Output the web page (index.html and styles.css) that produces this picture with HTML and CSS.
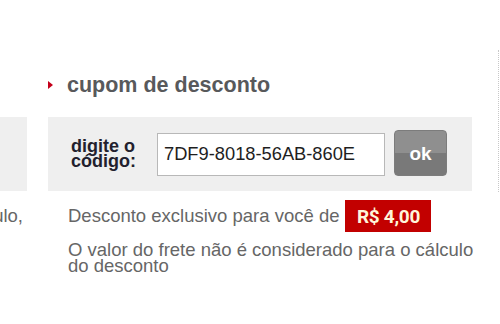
FILE: index.html
```html
<!doctype html>
<html>
<head>
    <title>Cupom de desconto</title>
    <meta charset="utf-8">
    <link rel="stylesheet" href="styles.css">
</head>
<body>
    <div class="pagina">
        <!-- Coluna anterior (cortada) -->
        <div class="anterior">
            <div class="anterior-caixa"></div>
            <p class="anterior-texto"><span>para o cálculo,</span></p>
        </div>

        <!-- Cupom -->
        <div class="cupom">
            <h2 class="titulo">cupom de desconto</h2>
            <div class="caixa">
                <label for="codigo" class="rotulo">digite o código:</label>
                <input autocomplete="off" type="text" id="codigo" class="campo" value="7DF9-8018-56AB-860E">
                <button class="botao">ok</button>
            </div>
            <div class="desconto">
                <span>Desconto exclusivo para você de</span>
                <span class="valor">R$ 4,00</span>
            </div>
            <p class="aviso">O valor do frete não é considerado para o cálculo do desconto</p>
        </div>

        <!-- Coluna seguinte -->
        <div class="seguinte"></div>
    </div>
</body>
</html>
```

FILE: styles.css
```css
body {
    margin: 0;
    background-color: white;
    font-family: "Liberation Sans", Arial, sans-serif;
}
.pagina {
    display: flex;
    align-items: flex-start;
    padding-top: 50px;
}
.anterior {
    width: 27px;
    margin-top: 67px;
    overflow: hidden;
}
.anterior-caixa {
    height: 74px;
    background-color: #efefef;
}
.anterior-texto {
    display: flex;
    justify-content: flex-end;
    margin: 14px 4px 0 0;
    font-size: 18.5px;
    color: #666;
    white-space: nowrap;
}
.cupom {
    width: 424px;
    margin-left: 21px;
    padding-top: 23px;
}
.titulo {
    display: flex;
    align-items: center;
    gap: 14px;
    margin: 0 0 20px 0;
    font-size: 21.5px;
    line-height: 24px;
    color: #58595b;
}
.titulo::before {
    content: "";
    border-left: 5px solid #c4001a;
    border-top: 4px solid transparent;
    border-bottom: 4px solid transparent;
}
.caixa {
    display: flex;
    align-items: center;
    height: 74px;
    padding-left: 23px;
    background-color: #efefef;
}
.rotulo {
    flex: none;
    width: 68px;
    margin-right: 18px;
    font-size: 18px;
    font-weight: bold;
    line-height: 15px;
    color: #231f2e;
}
.campo {
    box-sizing: border-box;
    width: 228px;
    height: 43px;
    padding: 0 0 0 6px;
    border: 1px solid #b8b8b8;
    font-family: "Liberation Sans", Arial, sans-serif;
    font-size: 18.3px;
    color: #1e1e1e;
}
.botao {
    width: 53px;
    height: 46px;
    margin: -3px 0 0 9px;
    padding-top: 4px;
    border: 1px solid #7c7c7c;
    border-radius: 4px;
    background: linear-gradient(#8f8f8f 50%, #797979 50%);
    font-family: "Liberation Sans", Arial, sans-serif;
    font-size: 19px;
    font-weight: bold;
    color: white;
    cursor: pointer;
}
.desconto {
    display: flex;
    align-items: center;
    gap: 6px;
    margin: 9px 0 0 20px;
    font-size: 18.5px;
    color: #666;
}
.valor {
    display: flex;
    align-items: center;
    justify-content: center;
    width: 86px;
    height: 32px;
    background-color: #c20000;
    font-family: Roboto, "Liberation Sans", sans-serif;
    font-weight: bold;
    font-size: 19px;
    letter-spacing: -0.3px;
    color: #fff6da;
}
.aviso {
    margin: 10px -14px 0 20px;
    font-size: 18.5px;
    line-height: 16px;
    color: #666;
}
.seguinte {
    height: 142px;
    margin-left: 26px;
    border-left: 1px dotted #c8c8c8;
}
```
